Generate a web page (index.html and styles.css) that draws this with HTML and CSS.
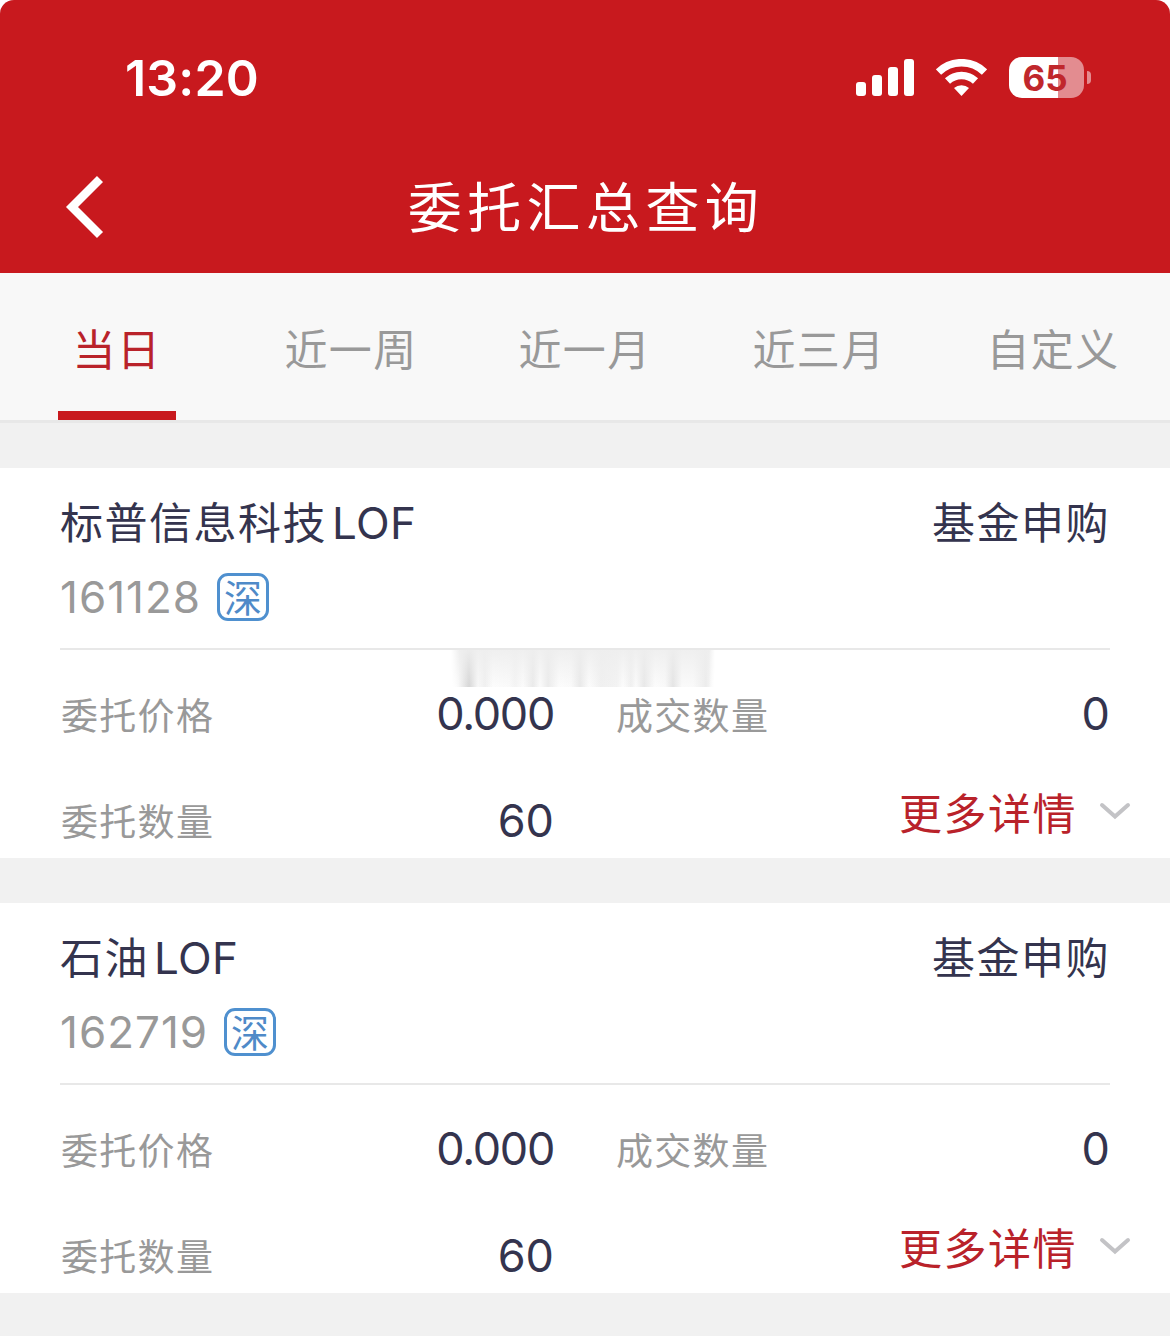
FILE: index.html
```html
<!DOCTYPE html>
<html lang="zh-CN">
<head>
    <meta charset="UTF-8">
    <meta name="viewport" content="width=device-width, initial-scale=1.0">
    <title>委托汇总查询</title>
    <link rel="stylesheet" href="styles.css">
</head>
<body>
    <header class="header">
        <div class="status-bar">
            <div class="time">13:20</div>
            <div class="status-icons">
                <svg class="signal" width="58" height="38" viewBox="0 0 58 38" fill="#fff">
                    <rect x="0" y="23" width="10" height="14" rx="3"/>
                    <rect x="16" y="16" width="10" height="21" rx="3"/>
                    <rect x="32" y="8" width="10" height="29" rx="3"/>
                    <rect x="48" y="0" width="10" height="37" rx="3"/>
                </svg>
                <svg class="wifi" width="51" height="38" viewBox="0 0 51 38">
                    <g fill="none" stroke="#fff" stroke-width="7.500">
                        <path d="M2.500 13a33 33 0 0 1 46 0"/>
                        <path d="M11.500 22a20.500 20.500 0 0 1 28 0"/>
                    </g>
                    <path d="M25.500 37l-7.500-8a11.500 11.500 0 0 1 15 0z" fill="#fff"/>
                </svg>
                <div class="battery">65</div>
                <div class="battery-cap"></div>
            </div>
        </div>
        <div class="nav-bar">
            <svg class="back" width="40" height="64" viewBox="0 0 40 64">
                <path d="M35 4L7 32l28 28" fill="none" stroke="#fff" stroke-width="8.500"/>
            </svg>
            <h1 class="title">委托汇总查询</h1>
        </div>
    </header>

    <nav class="tabs">
        <div class="tab active">当日</div>
        <div class="tab">近一周</div>
        <div class="tab">近一月</div>
        <div class="tab">近三月</div>
        <div class="tab">自定义</div>
    </nav>

    <main class="list">
        <section class="card">
            <div class="card-title">
                <span>标普信息科技<span class="latin">LOF</span></span>
                <span>基金申购</span>
            </div>
            <div class="card-code">
                <span class="code">161128</span>
                <span class="market">深</span>
            </div>
            <div class="card-body">
                <div class="smudge"></div>
                <div class="field"><span class="label">委托价格</span><span class="value price">0.000</span></div>
                <div class="field"><span class="label">成交数量</span><span class="value">0</span></div>
                <div class="field"><span class="label">委托数量</span><span class="value">60</span></div>
                <div class="more">
                    <span>更多详情</span>
                    <svg width="32" height="20" viewBox="0 0 32 20">
                        <path d="M3 4l13 11.500L29 4" fill="none" stroke="#c3c3c6" stroke-width="4" stroke-linecap="round"/>
                    </svg>
                </div>
            </div>
        </section>

        <section class="card">
            <div class="card-title">
                <span>石油<span class="latin">LOF</span></span>
                <span>基金申购</span>
            </div>
            <div class="card-code">
                <span class="code">162719</span>
                <span class="market">深</span>
            </div>
            <div class="card-body">
                <div class="field"><span class="label">委托价格</span><span class="value price">0.000</span></div>
                <div class="field"><span class="label">成交数量</span><span class="value">0</span></div>
                <div class="field"><span class="label">委托数量</span><span class="value">60</span></div>
                <div class="more">
                    <span>更多详情</span>
                    <svg width="32" height="20" viewBox="0 0 32 20">
                        <path d="M3 4l13 11.500L29 4" fill="none" stroke="#c3c3c6" stroke-width="4" stroke-linecap="round"/>
                    </svg>
                </div>
            </div>
        </section>
    </main>
</body>
</html>
```

FILE: styles.css
```css
* {
    box-sizing: border-box;
}
html {
    background-color: #fff;
}
body {
    margin: 0;
    width: 1170px;
    height: 1336px;
    overflow: hidden;
    background-color: #f1f1f1;
    border-radius: 14px 14px 0 0;
    font-family: Inter, "Noto Sans CJK SC", sans-serif;
    color: #34344e;
    white-space: nowrap;
}

/* header */
.header {
    height: 273px;
    background-color: #c8191e;
    color: #fff;
}
.status-bar {
    display: flex;
    justify-content: space-between;
    height: 142px;
    padding: 46px 79px 0 125px;
}
.time {
    height: 64px;
    line-height: 64px;
    font-size: 50px;
    font-weight: 600;
    letter-spacing: 0.2px;
}
.status-icons {
    display: flex;
    align-items: center;
    height: 64px;
}
.wifi {
    margin-left: 22px;
}
.battery {
    width: 75px;
    height: 41px;
    margin: 0 0 2px 22px;
    padding-right: 3px;
    border-radius: 13px;
    background: linear-gradient(to right, #fff 49px, #e38c90 49px);
    color: #c0272c;
    font-size: 35px;
    font-weight: 700;
    line-height: 42px;
    text-align: center;
}
.battery-cap {
    width: 4px;
    height: 13px;
    margin: 0 0 1px 3px;
    border-radius: 0 4px 4px 0;
    background-color: #e38c90;
}
.nav-bar {
    display: grid;
    grid-template-columns: 120px 1fr 120px;
    align-items: center;
    height: 130px;
}
.back {
    margin-left: 65px;
}
.title {
    margin: 0;
    padding: 4px 0 0 2px;
    font-size: 54px;
    font-weight: 400;
    line-height: 80px;
    letter-spacing: 5.4px;
    text-align: center;
}

/* date tabs */
.tabs {
    display: grid;
    grid-template-columns: repeat(5, 1fr);
    height: 150px;
    background-color: #f8f8f8;
    border-bottom: 3px solid #e8e8e8;
}
.tab {
    display: flex;
    flex-direction: column;
    align-items: center;
    height: 147px;
    padding-top: 47px;
    color: #999;
    font-size: 43px;
    line-height: 60px;
    letter-spacing: 1.4px;
}
.tab.active {
    color: #b9222a;
}
.tab.active::after {
    content: "";
    width: 118px;
    height: 9px;
    margin-top: auto;
    background-color: #c8191e;
}

/* order cards */
.list {
    display: flex;
    flex-direction: column;
    gap: 45px;
    padding-top: 45px;
}
.card {
    height: 390px;
    padding: 22px 60px 0;
    background-color: #fff;
}
.card-title {
    display: flex;
    justify-content: space-between;
    height: 64px;
    font-size: 43px;
    line-height: 66px;
    letter-spacing: 1.5px;
}
.latin {
    margin-left: 5px;
    font-size: 44px;
    letter-spacing: 0.3px;
}
.card-code {
    display: flex;
    align-items: center;
    height: 96px;
    padding-bottom: 8px;
    border-bottom: 2px solid #e8e8e8;
}
.code {
    color: #999;
    font-size: 44px;
    letter-spacing: 1px;
}
.market {
    width: 52px;
    height: 48px;
    margin-left: 16px;
    border: 3px solid #4f90cf;
    border-radius: 11px;
    color: #4f8ac8;
    font-size: 38px;
    line-height: 44px;
    text-align: center;
}
.card-body {
    position: relative;
    display: grid;
    grid-template-columns: 494px 495px;
    grid-template-rows: 127px 86px;
    column-gap: 61px;
}
.field {
    display: flex;
    align-items: center;
    justify-content: space-between;
}
.label {
    padding-left: 1px;
    color: #999;
    font-size: 37px;
    letter-spacing: 1.3px;
}
.value {
    font-size: 45px;
}
.value.price {
    letter-spacing: -1.3px;
}
.more {
    display: flex;
    align-items: center;
    justify-content: flex-end;
    gap: 22px;
    height: 68px;
    margin-right: -21px;
    color: #b9222a;
    font-size: 43px;
    letter-spacing: 1.5px;
}

/* blurred strip under the divider */
.smudge {
    position: absolute;
    top: 0;
    left: 391px;
    width: 264px;
    height: 37px;
    background:
        linear-gradient(to bottom, rgba(238, 238, 238, 0.9), rgba(255, 255, 255, 0)),
        linear-gradient(to right, #fff 0, #f7f7f7 8px, #d6d6d6 18px, #f8f8f8 27px, #f0f0f0 34px, #fcfcfc 42px, #fafafa 58px, #f4f4f4 64px, #fbfbfb 72px, #eaeaea 82px, #fbfbfb 89px, #ebebeb 97px, #fcfcfc 108px, #fafafa 120px, #e9e9e9 129px, #fcfcfc 138px, #f0f0f0 150px, #f3f3f3 166px, #fcfcfc 172px, #f0f0f0 180px, #fbfbfb 185px, #e8e8e8 193px, #fcfcfc 204px, #f9f9f9 214px, #e4e4e4 222px, #fafafa 231px, #fafafa 242px, #ececec 255px, #fff 264px);
    mask-image: linear-gradient(to right, transparent, #000 8px, #000 258px, transparent);
}
```
